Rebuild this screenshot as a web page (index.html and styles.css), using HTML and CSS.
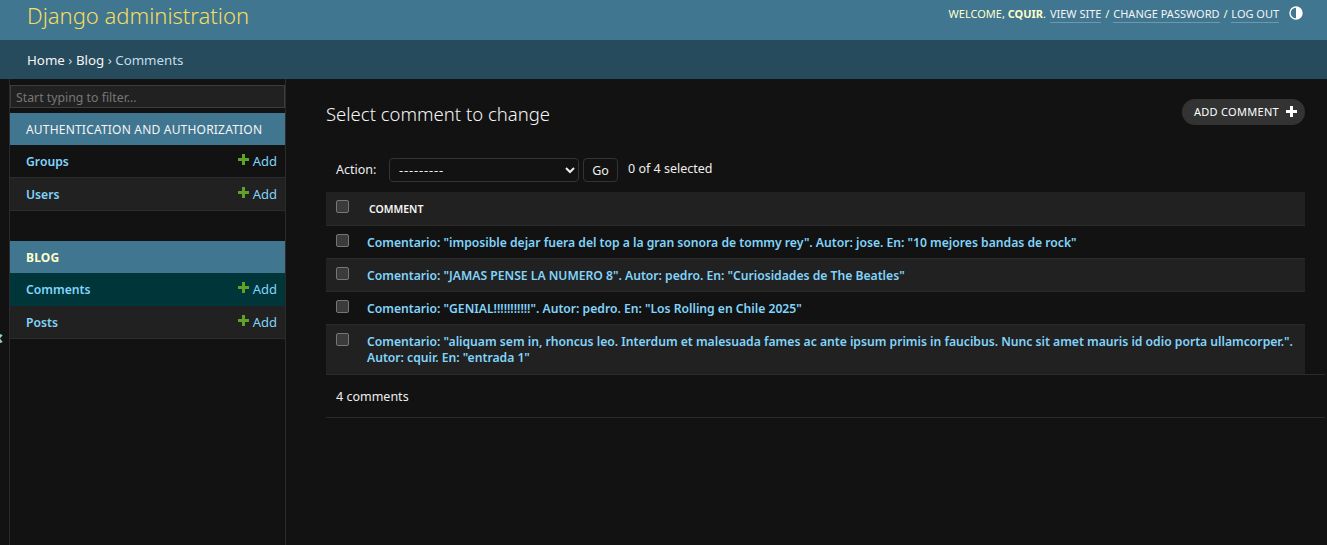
FILE: index.html
```html
<!DOCTYPE html>
<html lang="en">
<head>
  <meta charset="UTF-8">
  <title>Select comment to change | Django site admin</title>
  <link rel="stylesheet" href="styles.css">
</head>
<body>

  <div class="header">
    <div class="branding"><a href="#">Django administration</a></div>
    <div class="user-tools">
      Welcome, <strong>cquir</strong>.
      <a href="#">View site</a> /
      <a href="#">Change password</a> /
      <a href="#">Log out</a>
      <svg class="theme-icon" width="14" height="14" viewBox="0 0 14 14">
        <circle cx="7" cy="7" r="6" fill="none" stroke="#fff" stroke-width="1.4"/>
        <path d="M7 1a6 6 0 0 1 0 12z" fill="#fff"/>
      </svg>
    </div>
  </div>

  <div class="breadcrumbs">
    <a href="#">Home</a> › <a href="#">Blog</a> › Comments
  </div>

  <div class="main">
    <div class="sidebar">
      <button class="nav-toggle">«</button>
      <div class="sidebar-inner">
        <input class="nav-filter" type="text" placeholder="Start typing to filter...">

        <div class="module">
          <div class="caption">Authentication and Authorization</div>
          <div class="model-row">
            <a href="#" class="model-name">Groups</a>
            <a href="#" class="addlink"><svg width="11" height="11" viewBox="0 0 11 11"><path d="M4 0h3v4h4v3H7v4H4V7H0V4h4z" fill="#5fa225"/></svg>Add</a>
          </div>
          <div class="model-row alt">
            <a href="#" class="model-name">Users</a>
            <a href="#" class="addlink"><svg width="11" height="11" viewBox="0 0 11 11"><path d="M4 0h3v4h4v3H7v4H4V7H0V4h4z" fill="#5fa225"/></svg>Add</a>
          </div>
        </div>

        <div class="module">
          <div class="caption current-app">Blog</div>
          <div class="model-row current">
            <a href="#" class="model-name">Comments</a>
            <a href="#" class="addlink"><svg width="11" height="11" viewBox="0 0 11 11"><path d="M4 0h3v4h4v3H7v4H4V7H0V4h4z" fill="#5fa225"/></svg>Add</a>
          </div>
          <div class="model-row alt">
            <a href="#" class="model-name">Posts</a>
            <a href="#" class="addlink"><svg width="11" height="11" viewBox="0 0 11 11"><path d="M4 0h3v4h4v3H7v4H4V7H0V4h4z" fill="#5fa225"/></svg>Add</a>
          </div>
        </div>
      </div>
    </div>

    <div class="content">
      <div class="title-row">
        <h1>Select comment to change</h1>
        <a href="#" class="add-btn">Add comment<svg width="11" height="11" viewBox="0 0 11 11"><path d="M4 0h3v4h4v3H7v4H4V7H0V4h4z" fill="#fff"/></svg></a>
      </div>

      <div class="actions">
        <label>Action:</label>
        <select class="action-select"><option>---------</option></select>
        <button class="go-btn">Go</button>
        <span class="counter">0 of 4 selected</span>
      </div>

      <div class="result-head">
        <input type="checkbox" class="check">
        <span class="head-label">Comment</span>
      </div>
      <div class="result-row">
        <input type="checkbox" class="check">
        <a href="#">Comentario: "imposible dejar fuera del top a la gran sonora de tommy rey". Autor: jose. En: "10 mejores bandas de rock"</a>
      </div>
      <div class="result-row alt">
        <input type="checkbox" class="check">
        <a href="#">Comentario: "JAMAS PENSE LA NUMERO 8". Autor: pedro. En: "Curiosidades de The Beatles"</a>
      </div>
      <div class="result-row">
        <input type="checkbox" class="check">
        <a href="#">Comentario: "GENIAL!!!!!!!!!!!". Autor: pedro. En: "Los Rolling en Chile 2025"</a>
      </div>
      <div class="result-row alt last">
        <input type="checkbox" class="check">
        <a href="#">Comentario: "aliquam sem in, rhoncus leo. Interdum et malesuada fames ac ante ipsum primis in faucibus. Nunc sit amet mauris id odio porta ullamcorper.". Autor: cquir. En: "entrada 1"</a>
      </div>

      <div class="paginator">4 comments</div>
    </div>
  </div>

</body>
</html>
```

FILE: styles.css
```css
* {
  box-sizing: border-box;
}
html, body {
  height: 100%;
}
body {
  margin: 0;
  background-color: #121212;
  color: #eeeeee;
  font-family: "Noto Sans", "Open Sans", sans-serif;
  font-size: 12.5px;
  overflow: hidden;
}
a {
  text-decoration: none;
}

.header {
  height: 40px;
  background-color: #417690;
  display: flex;
  justify-content: space-between;
  padding: 0 24px 0 27px;
}
.branding a {
  display: block;
  color: #f5dd5d;
  font-size: 22px;
  font-weight: 300;
  line-height: 30px;
}
.user-tools {
  display: block;
  padding-top: 6px;
  color: #ffffcc;
  font-size: 11px;
  line-height: 14px;
  text-transform: uppercase;
  white-space: nowrap;
}
.user-tools a {
  margin: 0 1px;
  padding-bottom: 1px;
  color: #f5f5f5;
  border-bottom: 1px solid rgba(255, 255, 255, 0.25);
}
.user-tools strong {
  font-weight: 700;
}
.theme-icon {
  margin-left: 6px;
  vertical-align: -2px;
}

.breadcrumbs {
  height: 39px;
  background-color: #264b5d;
  color: #c4dce8;
  padding-left: 27px;
  font-size: 13.3px;
  line-height: 40px;
}
.breadcrumbs a {
  color: #f5f5f5;
}

.main {
  display: flex;
  height: 466px;
}

.sidebar {
  position: relative;
  width: 286px;
  flex: none;
  padding-left: 9px;
  border-right: 1px solid #2b2b2b;
}
.sidebar-inner {
  height: 100%;
  padding-top: 6px;
  border-left: 1px solid #2b2b2b;
}
.nav-toggle {
  position: absolute;
  left: -9px;
  top: 248px;
  width: 12px;
  padding: 0;
  border: 0;
  background: none;
  color: #81d4fa;
  font-family: inherit;
  font-size: 20px;
  font-weight: 700;
  line-height: 20px;
}
.nav-filter {
  display: block;
  width: 100%;
  height: 23px;
  margin-bottom: 5px;
  padding: 3px 5px 1px;
  background-color: #212121;
  border: 1px solid #3d3d3d;
  color: #eeeeee;
  font-family: inherit;
  font-size: 12.3px;
}
.nav-filter::placeholder {
  color: #777777;
}

.module {
  margin-bottom: 30px;
}
.caption {
  height: 32px;
  padding-left: 16px;
  background-color: #417690;
  color: #f5f5f5;
  font-size: 12px;
  line-height: 34px;
  text-transform: uppercase;
  letter-spacing: 0.2px;
}
.current-app {
  color: #ffffcc;
  font-weight: 700;
}
.model-row {
  display: flex;
  justify-content: space-between;
  align-items: center;
  height: 33px;
  padding: 0 8px 0 16px;
  border-bottom: 1px solid #2b2b2b;
}
.model-row.alt {
  background-color: #212121;
}
.model-row.current {
  background-color: #00363a;
  border-bottom-color: #00363a;
}
.model-name {
  color: #81d4fa;
  font-weight: 600;
  font-size: 12.2px;
}
.addlink {
  display: flex;
  align-items: center;
  gap: 4px;
  color: #81d4fa;
  font-size: 13px;
}
.addlink svg {
  margin-top: -3px;
}

.content {
  flex: 1;
  padding: 0 22px 0 40px;
}
.title-row {
  display: flex;
  justify-content: space-between;
  height: 79px;
  padding-top: 20px;
}
h1 {
  margin: 0;
  color: #f5f5f5;
  font-size: 18.5px;
  font-weight: 300;
  line-height: 30px;
}
.add-btn {
  display: flex;
  align-items: center;
  gap: 7px;
  height: 26px;
  padding: 0 8px 1px 12px;
  border-radius: 13px;
  background-color: #333333;
  color: #ffffff;
  font-size: 11px;
  text-transform: uppercase;
  letter-spacing: 0.3px;
}

.actions {
  display: flex;
  align-items: flex-start;
  height: 34px;
  padding-left: 10px;
}
.actions label {
  width: 53px;
  line-height: 24px;
}
.action-select {
  width: 190px;
  height: 24px;
  padding: 0 5px;
  background-color: #121212;
  border: 1px solid #333333;
  border-radius: 4px;
  color: #eeeeee;
  font-family: inherit;
  font-size: 13px;
  letter-spacing: 0.8px;
}
.go-btn {
  width: 35px;
  height: 24px;
  margin-left: 4px;
  padding: 0;
  background-color: #121212;
  border: 1px solid #333333;
  border-radius: 4px;
  color: #eeeeee;
  font-family: inherit;
  font-size: 12.5px;
}
.counter {
  margin-left: 10px;
  line-height: 21px;
}

.check {
  flex: none;
  appearance: none;
  width: 13px;
  height: 13px;
  margin: 8px 18px 0 0;
  background-color: #3b3b3b;
  border: 1px solid #767676;
  border-radius: 2px;
}
.result-head {
  display: flex;
  height: 34px;
  padding-left: 10px;
  background-color: #212121;
  border-bottom: 1px solid #2b2b2b;
}
.head-label {
  padding: 10px 0 0 2px;
  color: #f5f5f5;
  font-size: 10.5px;
  font-weight: 600;
  text-transform: uppercase;
}
.result-row {
  display: flex;
  min-height: 33px;
  padding: 0 10px;
  border-bottom: 1px solid #2b2b2b;
}
.result-row.alt {
  background-color: #212121;
}
.result-row.last {
  border-bottom: 0;
  min-height: 49px;
}
.result-row a {
  padding: 9px 0 7px;
  color: #81d4fa;
  font-size: 12.2px;
  font-weight: 600;
  line-height: 16px;
  letter-spacing: -0.02px;
}

.paginator {
  height: 44px;
  margin-right: -20px;
  padding: 14px 10px 0;
  border-top: 1px solid #2b2b2b;
  border-bottom: 1px solid #2b2b2b;
  line-height: 16px;
}
```
